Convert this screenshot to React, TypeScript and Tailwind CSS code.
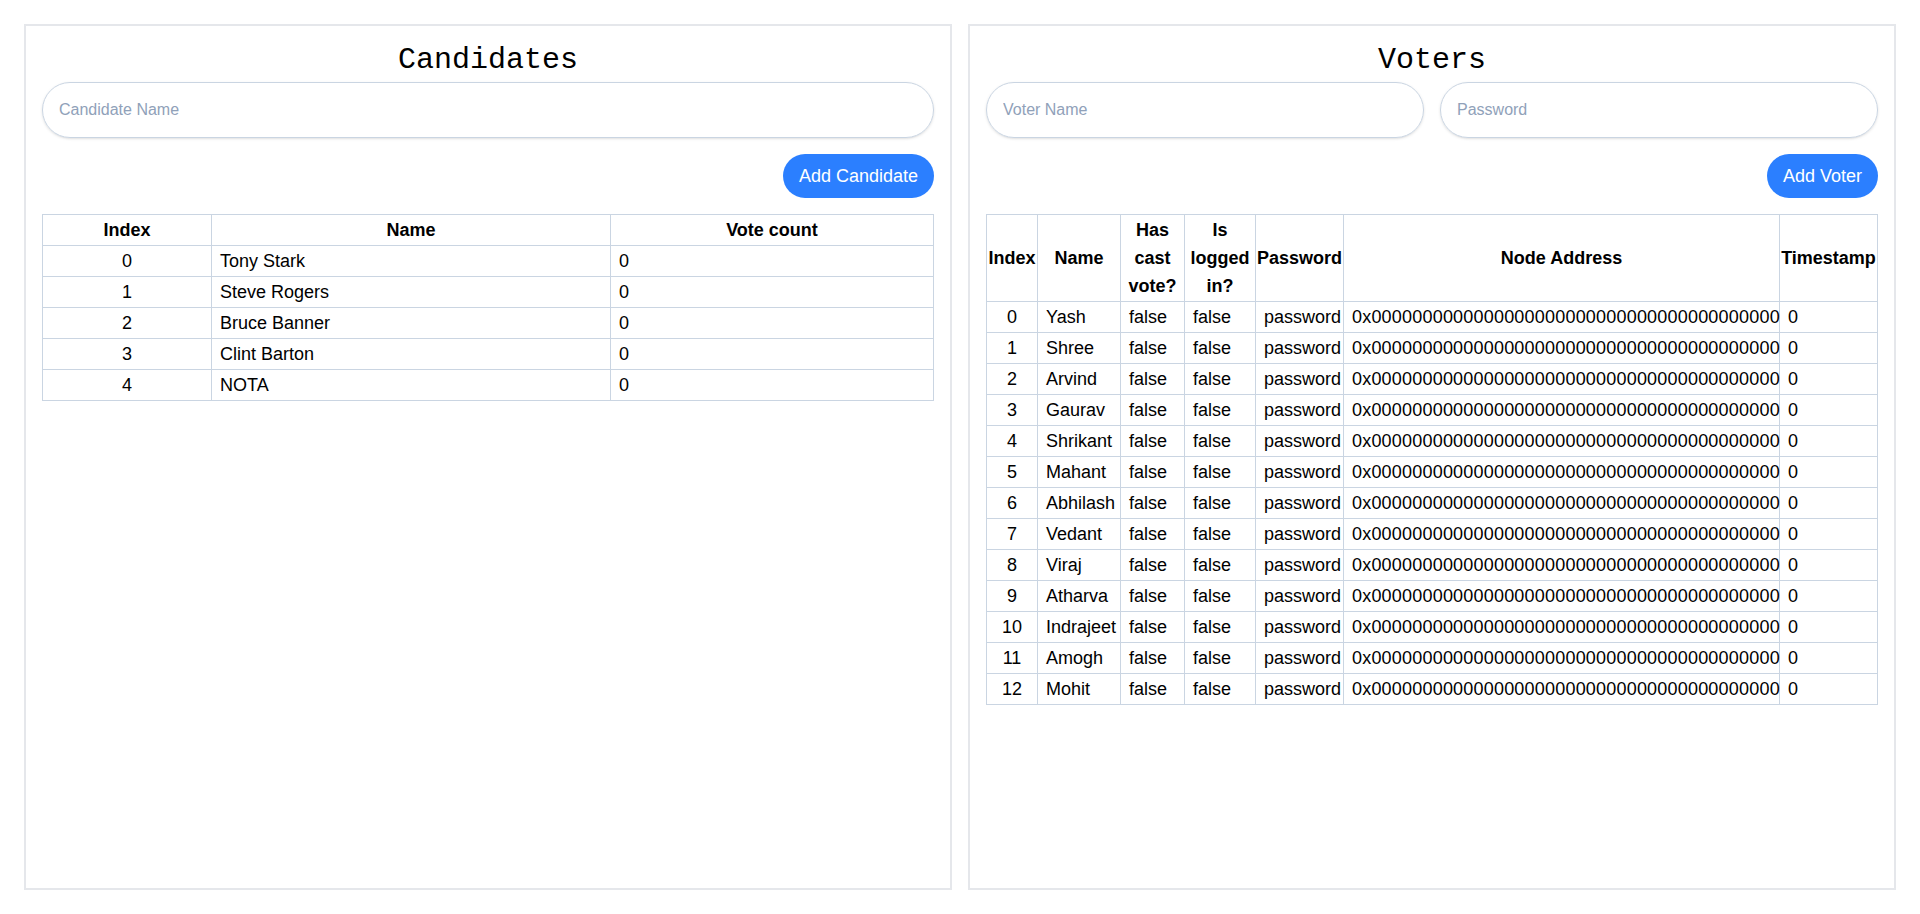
import React from "react"

const candidates = ["Tony Stark", "Steve Rogers", "Bruce Banner", "Clint Barton", "NOTA"]

const voters = [
  "Yash",
  "Shree",
  "Arvind",
  "Gaurav",
  "Shrikant",
  "Mahant",
  "Abhilash",
  "Vedant",
  "Viraj",
  "Atharva",
  "Indrajeet",
  "Amogh",
  "Mohit",
]

const zeroAddress = "0x" + "0".repeat(40)

export default function App() {
  return (
    <div className="flex h-screen gap-4 bg-white p-6 font-['Liberation_Sans',Arial,sans-serif] text-black">
      {/* candidates panel */}
      <section className="flex min-w-0 flex-1 flex-col border-2 border-gray-200 p-4">
        <h1 className="text-center font-['Liberation_Mono','Courier_New',monospace] text-[30px] leading-9">
          Candidates
        </h1>
        <input
          className="mt-1 h-14 w-full rounded-full border border-slate-300 px-4 text-base shadow-sm outline-none placeholder:text-slate-400"
          placeholder="Candidate Name"
        />
        <div className="mt-4 flex justify-end">
          <button className="rounded-full bg-blue-500 px-4 py-2 text-lg leading-7 text-white">
            Add Candidate
          </button>
        </div>
        <table className="mt-4 w-full table-fixed border-collapse text-lg leading-7">
          <colgroup>
            <col className="w-[169px]" />
            <col className="w-[399px]" />
            <col />
          </colgroup>
          <thead>
            <tr>
              <th className="border border-slate-300 py-px font-bold">Index</th>
              <th className="border border-slate-300 py-px font-bold">Name</th>
              <th className="border border-slate-300 py-px font-bold">Vote count</th>
            </tr>
          </thead>
          <tbody>
            {candidates.map((name, i) => (
              <tr key={name}>
                <td className="border border-slate-300 py-px text-center">{i}</td>
                <td className="border border-slate-300 py-px pl-2">{name}</td>
                <td className="border border-slate-300 py-px pl-2">0</td>
              </tr>
            ))}
          </tbody>
        </table>
      </section>

      {/* voters panel */}
      <section className="flex min-w-0 flex-1 flex-col border-2 border-gray-200 p-4">
        <h1 className="text-center font-['Liberation_Mono','Courier_New',monospace] text-[30px] leading-9">
          Voters
        </h1>
        <div className="mt-1 grid grid-cols-2 gap-4">
          <input
            className="h-14 w-full rounded-full border border-slate-300 px-4 text-base shadow-sm outline-none placeholder:text-slate-400"
            placeholder="Voter Name"
          />
          <input
            type="password"
            className="h-14 w-full rounded-full border border-slate-300 px-4 text-base shadow-sm outline-none placeholder:text-slate-400"
            placeholder="Password"
          />
        </div>
        <div className="mt-4 flex justify-end">
          <button className="rounded-full bg-blue-500 px-4 py-2 text-lg leading-7 text-white">
            Add Voter
          </button>
        </div>
        <table className="mt-4 w-full table-fixed border-collapse text-lg leading-7">
          <colgroup>
            <col className="w-[51px]" />
            <col className="w-[83px]" />
            <col className="w-[64px]" />
            <col className="w-[71px]" />
            <col className="w-[88px]" />
            <col className="w-[436px]" />
            <col />
          </colgroup>
          <thead>
            <tr>
              <th className="border border-slate-300 py-px font-bold">Index</th>
              <th className="border border-slate-300 py-px font-bold">Name</th>
              <th className="border border-slate-300 py-px font-bold">Has cast vote?</th>
              <th className="border border-slate-300 py-px font-bold">Is logged in?</th>
              <th className="border border-slate-300 py-px font-bold">Password</th>
              <th className="border border-slate-300 py-px font-bold">Node Address</th>
              <th className="whitespace-nowrap border border-slate-300 py-px font-bold">Timestamp</th>
            </tr>
          </thead>
          <tbody>
            {voters.map((name, i) => (
              <tr key={name}>
                <td className="border border-slate-300 py-px text-center">{i}</td>
                <td className="whitespace-nowrap border border-slate-300 py-px pl-2">{name}</td>
                <td className="border border-slate-300 py-px pl-2">false</td>
                <td className="border border-slate-300 py-px pl-2">false</td>
                <td className="border border-slate-300 py-px pl-2">password</td>
                <td className="whitespace-nowrap border border-slate-300 py-px pl-2 tracking-[0.2px]">
                  {zeroAddress}
                </td>
                <td className="border border-slate-300 py-px pl-2">0</td>
              </tr>
            ))}
          </tbody>
        </table>
      </section>
    </div>
  )
}
